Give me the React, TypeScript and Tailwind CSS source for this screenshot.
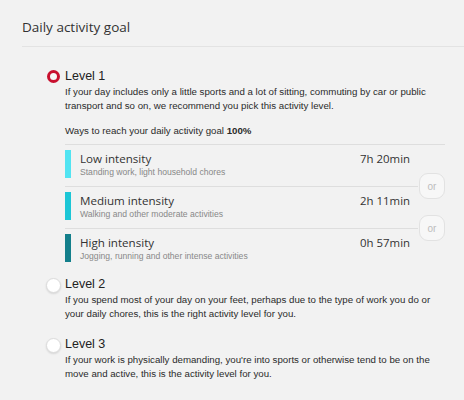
const sans = "font-['Liberation_Sans',Arial,sans-serif]";
const open = "font-['Open_Sans',sans-serif]";

type Way = { title: string; sub: string; time: string; color: string };

const ways: Way[] = [
  { title: "Low intensity", sub: "Standing work, light household chores", time: "7h 20min", color: "bg-[#52e4f2]" },
  { title: "Medium intensity", sub: "Walking and other moderate activities", time: "2h 11min", color: "bg-[#1cc6d6]" },
  { title: "High intensity", sub: "Jogging, running and other intense activities", time: "0h 57min", color: "bg-[#137f8b]" },
];

function Radio({ checked }: { checked?: boolean }) {
  return checked ? (
    <span className="mt-[2px] block h-[13px] w-[13px] shrink-0 rounded-full border-[3px] border-[#c8102e] bg-[#f6f6f6]" />
  ) : (
    <span className="mt-[2px] block h-[15px] w-[15px] shrink-0 rounded-full border border-[#dcdcdc] bg-white shadow-[0_1px_2px_rgba(0,0,0,0.12)]" />
  );
}

function Or({ top }: { top: string }) {
  return (
    <div
      className={`absolute right-[-27px] ${top} flex h-[26px] w-[26px] items-center justify-center rounded-[9px] border border-[#e2e2e2] bg-[#f7f7f7] ${sans} text-[10px] text-[#bdbdbd]`}
    >
      or
    </div>
  );
}

export default function App() {
  return (
    <div className={`h-[400px] w-[464px] overflow-hidden bg-[#f2f2f2] text-[#2a2a2a] ${sans}`}>
      <div className="ml-[22px] border-b border-[#e3e3e3] pt-[17px] pb-[9px]">
        <h1 className={`${open} text-[13.5px] leading-[20px] text-[#333]`}>Daily activity goal</h1>
      </div>

      <div className="ml-[47px] mt-[21px] flex gap-[5px]">
        <Radio checked />
        <div className="w-[380px]">
          <div className="text-[12.5px] leading-[17px] text-[#222]">Level 1</div>
          <p className="whitespace-nowrap text-[9.7px] leading-[14px]">
            If your day includes only a little sports and a lot of sitting, commuting by car or public
            <br />
            transport and so on, we recommend you pick this activity level.
          </p>
          <div className="mt-[11px] border-b border-[#dedede] pb-[6px] text-[9.7px] leading-[14px]">
            Ways to reach your daily activity goal <b>100%</b>
          </div>
          <div className="relative mr-[27px]">
            {ways.map((w, i) => (
              <div
                key={w.title}
                className={`flex h-[41px] items-start pt-[5px] ${i < ways.length - 1 ? "h-[42px] border-b border-[#dedede]" : ""}`}
              >
                <span className={`h-[28px] w-[6px] shrink-0 ${w.color}`} />
                <div className="ml-[9px] flex-1 pt-[1px]">
                  <div className={`${open} text-[11.6px] leading-[16px] text-[#333]`}>{w.title}</div>
                  <div className="text-[8.6px] leading-[11px] text-[#888]">{w.sub}</div>
                </div>
                <div className={`${open} pr-[8px] pt-[1px] text-[11.4px] leading-[16px] text-[#333]`}>{w.time}</div>
              </div>
            ))}
            <Or top="top-[28px]" />
            <Or top="top-[70px]" />
          </div>
        </div>
      </div>

      <div className="ml-[46px] mt-[6px] flex gap-[4px]">
        <Radio />
        <div>
          <div className="text-[12.5px] leading-[17px] text-[#222]">Level 2</div>
          <p className="whitespace-nowrap text-[9.7px] leading-[14px]">
            If you spend most of your day on your feet, perhaps due to the type of work you do or
            <br />
            your daily chores, this is the right activity level for you.
          </p>
        </div>
      </div>

      <div className="ml-[46px] mt-[15px] flex gap-[4px]">
        <Radio />
        <div>
          <div className="text-[12.5px] leading-[17px] text-[#222]">Level 3</div>
          <p className="whitespace-nowrap text-[9.7px] leading-[14px]">
            If your work is physically demanding, you're into sports or otherwise tend to be on the
            <br />
            move and active, this is the activity level for you.
          </p>
        </div>
      </div>
    </div>
  );
}
